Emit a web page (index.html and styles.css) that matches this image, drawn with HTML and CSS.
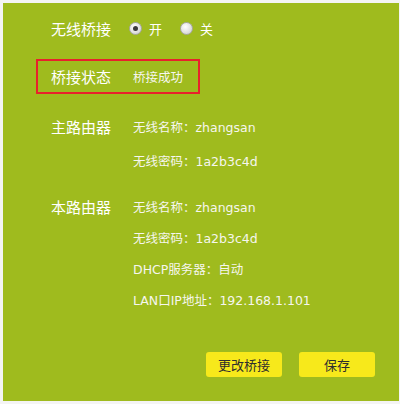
FILE: index.html
```html
<!DOCTYPE html>
<html lang="zh-CN">
<head>
<meta charset="utf-8">
<link rel="stylesheet" href="styles.css">
</head>
<body>
<div class="panel">
  <div class="row first">
    <span class="label">无线桥接</span>
    <span class="radios">
      <span class="radio checked"></span><span class="opt">开</span>
      <span class="radio"></span><span class="opt">关</span>
    </span>
  </div>
  <div class="status-box">
    <span class="label">桥接状态</span>
    <span class="value">桥接成功</span>
  </div>
  <div class="section sec-main">
    <span class="label">主路由器</span>
    <span class="value">无线名称：zhangsan</span>
    <span class="value col2">无线密码：1a2b3c4d</span>
  </div>
  <div class="section sec-local">
    <span class="label">本路由器</span>
    <span class="value">无线名称：zhangsan</span>
    <span class="value col2">无线密码：1a2b3c4d</span>
    <span class="value col2">DHCP服务器：自动</span>
    <span class="value col2">LAN口IP地址：192.168.1.101</span>
  </div>
  <div class="actions">
    <button class="btn">更改桥接</button>
    <button class="btn">保存</button>
  </div>
</div>
</body>
</html>
```
FILE: styles.css
```css
html, body {
  margin: 0;
  padding: 0;
  background: #f4f4f4;
}
body {
  padding: 3px 1px 3px 3px;
  font-family: "Noto Sans CJK SC", sans-serif;
}
.panel {
  box-sizing: border-box;
  height: 398px;
  background: #9fbb1e;
  padding: 9px 0 0 48px;
  display: flex;
  flex-direction: column;
}
.label {
  width: 82px;
  flex: none;
  font-size: 15px;
  color: #ffffff;
}
.value {
  font-family: "DejaVu Sans", "Noto Sans CJK SC", sans-serif;
  font-size: 12.5px;
  color: #f6f6ee;
}
.row {
  display: flex;
  align-items: center;
  height: 32px;
}
.radios {
  display: flex;
  align-items: center;
  margin-left: -4px;
}
.radio {
  box-sizing: border-box;
  width: 13px;
  height: 13px;
  border-radius: 50%;
  border: 1px solid #a8a8a8;
  background: radial-gradient(circle at 40% 35%, #ffffff 0%, #e2e2e2 55%, #c6c6c6 100%);
  display: flex;
  align-items: center;
  justify-content: center;
}
.radio.checked::after {
  content: "";
  width: 5px;
  height: 5px;
  border-radius: 50%;
  background: #3a3a3a;
}
.opt {
  font-size: 13px;
  color: #ffffff;
  margin: 0 18px 0 7px;
}
.status-box {
  box-sizing: border-box;
  margin: 15px 0 0 -15px;
  padding-left: 13px;
  width: 164px;
  height: 35px;
  border: 2px solid #e8212c;
  display: flex;
  align-items: center;
}
.section {
  display: grid;
  grid-template-columns: 82px auto;
  grid-auto-rows: 31px;
  align-items: center;
}
.section .label {
  grid-row: 1;
}
.section .col2 {
  grid-column: 2;
}
.sec-main {
  margin-top: 17px;
  row-gap: 3px;
}
.sec-local {
  margin-top: 15px;
}
.actions {
  display: flex;
  justify-content: flex-end;
  gap: 17px;
  margin: 37px 24px 0 0;
}
.btn {
  width: 76px;
  height: 25px;
  border: none;
  border-radius: 3px;
  background: #f7e91b;
  color: #2e2e2e;
  font-family: "Noto Sans CJK SC", sans-serif;
  font-size: 13px;
  padding: 0;
}
```
